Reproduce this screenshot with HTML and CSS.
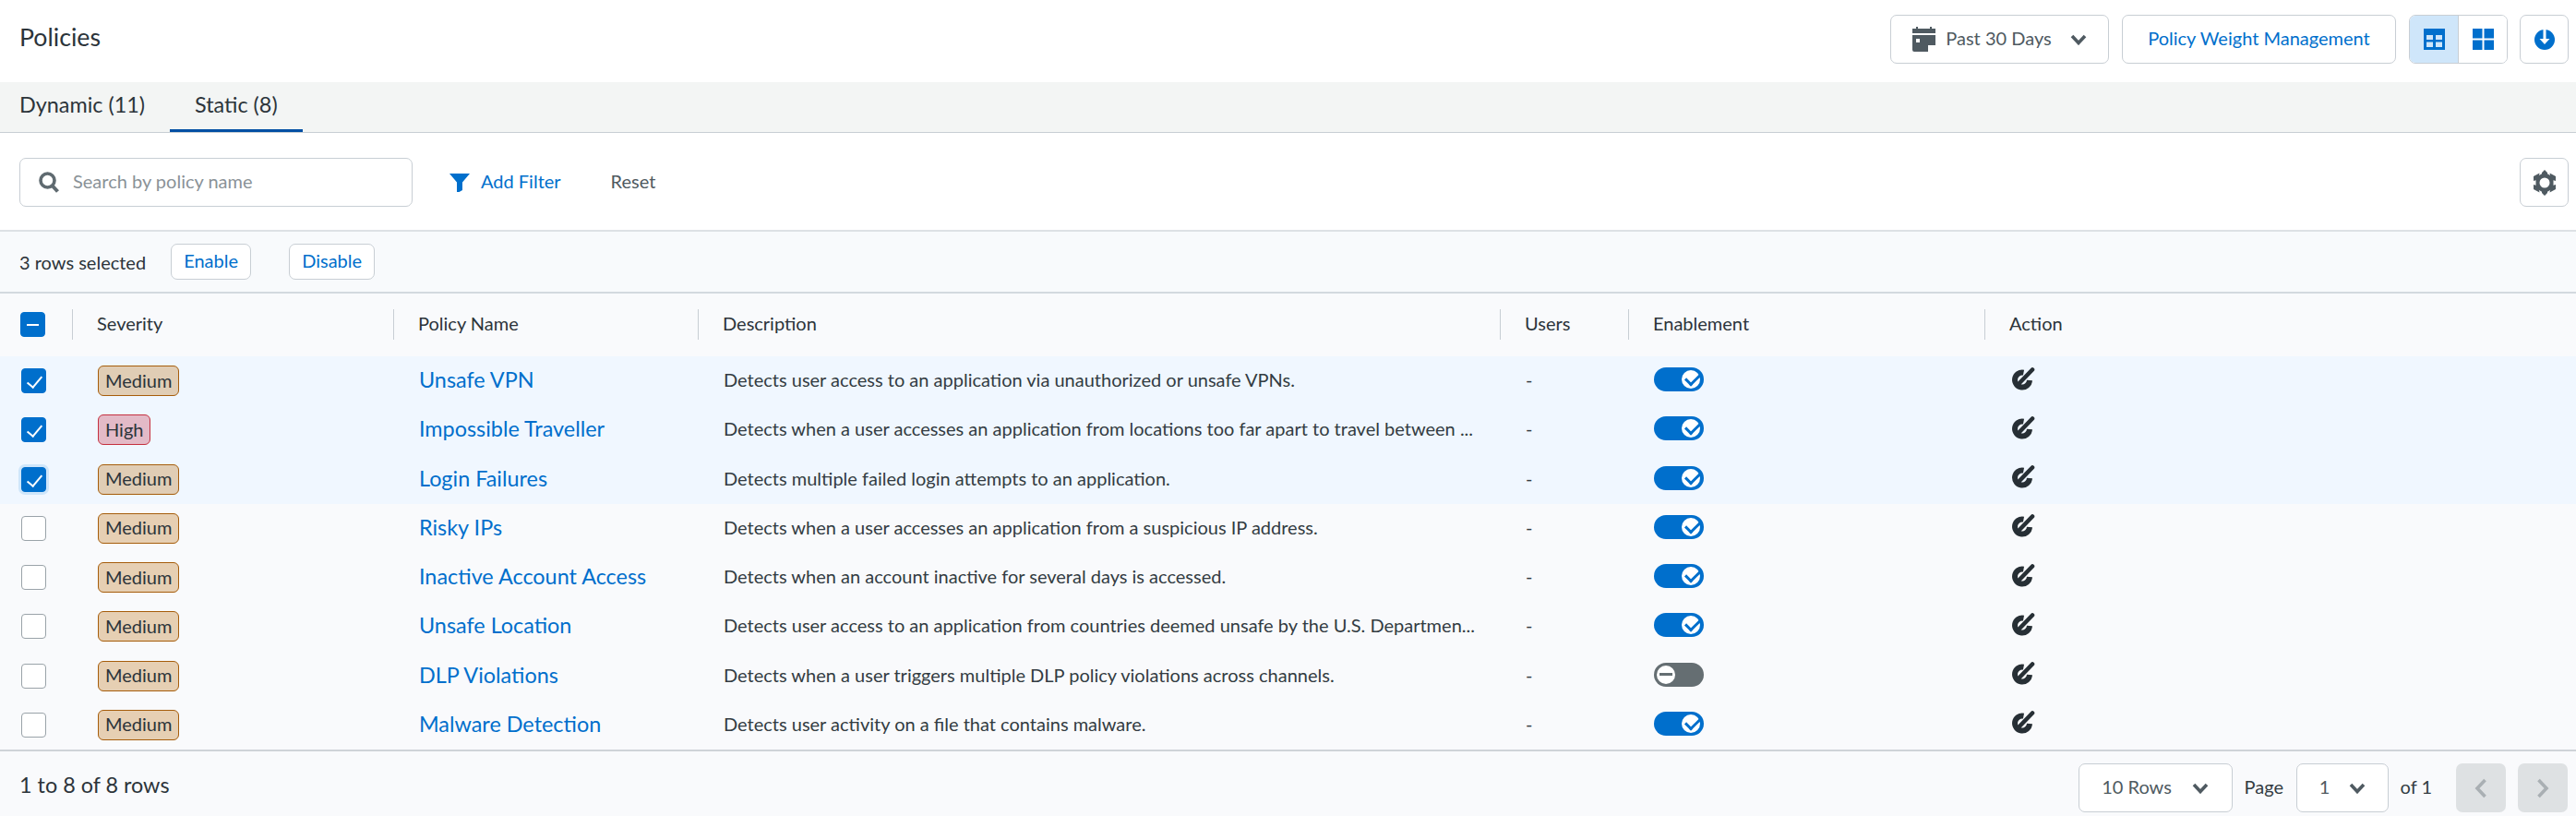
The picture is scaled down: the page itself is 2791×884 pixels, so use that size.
FILE: index.html
```html
<!DOCTYPE html>
<html lang="en">
<head>
    <meta charset="UTF-8">
    <title>Policies</title>
    <link rel="stylesheet" href="styles.css">
</head>
<body>
    <svg class="icon-defs" width="0" height="0">
        <symbol id="action-icon" viewBox="0 0 26 26">
            <path d="M13.500 6.600A8 8 0 1 0 20 15" fill="none" stroke="currentColor" stroke-width="6"/>
            <path d="M8 19 L23 3.500" fill="none" stroke="currentColor" stroke-width="4.600" stroke-linecap="round"/>
        </symbol>
        <symbol id="chevron-icon" viewBox="0 0 18 12">
            <path d="M2 2 L9 9.500 L16 2" fill="none" stroke="currentColor" stroke-width="3.600"/>
        </symbol>
    </svg>

    <header class="page-header">
        <h1>Policies</h1>
        <div class="header-actions">
            <button class="btn date-btn">
                <svg width="25" height="27" viewBox="0 0 25 27"><path d="M0 2h4V0h2v2h13V0h2v2h4v5H0zM0 9h25v11h-8v7H2a2 2 0 0 1-2-2zM4 13v4h4v-4z" fill="#4f5a61" fill-rule="evenodd"/></svg>
                <span class="label">Past 30 Days</span>
                <svg class="chevron" width="18" height="12"><use href="#chevron-icon"/></svg>
            </button>
            <button class="btn btn-link weight-btn"><span class="label">Policy Weight Management</span></button>
            <div class="view-switch">
                <button class="view-btn active">
                    <svg width="23" height="23" viewBox="0 0 23 23"><path d="M0 0h23v23H0z" fill="#006fcc"/><path d="M3 7h7v5H3zM13 7h7v5h-7zM3 14.500h7V20H3zM13 14.500h7V20h-7z" fill="#cfe6fa"/></svg>
                </button>
                <button class="view-btn">
                    <svg width="23" height="23" viewBox="0 0 23 23"><path d="M0 0h10.500v10.500H0zM12.500 0H23v10.500H12.500zM0 12.500h10.500V23H0zM12.500 12.500H23V23H12.500z" fill="#006fcc"/></svg>
                </button>
            </div>
            <button class="btn icon-btn download">
                <svg width="22" height="22" viewBox="0 0 22 22"><circle cx="11" cy="11" r="11" fill="#006fcc"/><path d="M9.500 0h3v10h4l-5.500 6-5.500-6h4z" fill="#fff"/></svg>
            </button>
        </div>
    </header>

    <nav class="tabs">
        <a class="tab">Dynamic (11)</a>
        <a class="tab active">Static (8)</a>
    </nav>

    <section class="filter-bar">
        <label class="search">
            <svg width="23" height="23" viewBox="0 0 23 23"><circle cx="9.500" cy="9.500" r="7.500" fill="none" stroke="#5f6a70" stroke-width="3.600"/><path d="M14.500 15 L20.500 21.500" stroke="#5f6a70" stroke-width="4"/></svg>
            <input type="text" placeholder="Search by policy name">
        </label>
        <button class="text-btn add-filter">
            <svg width="22" height="20" viewBox="0 0 22 20"><path d="M0 0h22l-8 9.500V18l-3.500 2H8V9.500z" fill="#006fcc"/></svg>
            <span class="label">Add Filter</span>
        </button>
        <button class="text-btn reset"><span class="label">Reset</span></button>
        <button class="btn icon-btn settings">
            <svg width="24" height="28" viewBox="0 0 24 28"><path d="M12 2.500 21.500 8v12L12 25.500 2.500 20V8z" fill="#4f5a61"/><path d="M9 3l3-3 3 3v3H9zM9 25l3 3 3-3v-3H9zM17.500 3.500 24 7v5l-5-1.500zM6.500 3.500 0 7v5l5-1.500zM17.500 24.500 24 21v-5l-5 1.500zM6.500 24.500 0 21v-5l5 1.500z" fill="#4f5a61"/><circle cx="12" cy="14" r="5.500" fill="#fff"/></svg>
        </button>
    </section>

    <section class="selection-bar">
        <span>3 rows selected</span>
        <button class="btn btn-link small enable"><span class="label">Enable</span></button>
        <button class="btn btn-link small"><span class="label">Disable</span></button>
    </section>

    <table class="policies">
        <colgroup>
            <col class="col-check"><col class="col-severity"><col class="col-name"><col class="col-desc"><col class="col-users"><col class="col-enable"><col>
        </colgroup>
        <thead>
            <tr>
                <th class="check-cell"><span class="checkbox mixed"></span></th>
                <th><div class="th-inner">Severity</div></th>
                <th><div class="th-inner">Policy Name</div></th>
                <th><div class="th-inner">Description</div></th>
                <th><div class="th-inner">Users</div></th>
                <th><div class="th-inner">Enablement</div></th>
                <th><div class="th-inner">Action</div></th>
            </tr>
        </thead>
        <tbody>
            <tr class="selected">
                <td class="check-cell"><span class="checkbox checked"></span></td>
                <td><span class="badge medium">Medium</span></td>
                <td class="text-cell"><a class="policy-link">Unsafe VPN</a></td>
                <td class="text-cell">Detects user access to an application via unauthorized or unsafe VPNs.</td>
                <td class="text-cell">-</td>
                <td><span class="toggle on"></span></td>
                <td><svg class="action" width="26" height="26"><use href="#action-icon"/></svg></td>
            </tr>
            <tr class="selected">
                <td class="check-cell"><span class="checkbox checked"></span></td>
                <td><span class="badge high">High</span></td>
                <td class="text-cell"><a class="policy-link">Impossible Traveller</a></td>
                <td class="text-cell">Detects when a user accesses an application from locations too far apart to travel between ...</td>
                <td class="text-cell">-</td>
                <td><span class="toggle on"></span></td>
                <td><svg class="action" width="26" height="26"><use href="#action-icon"/></svg></td>
            </tr>
            <tr class="selected">
                <td class="check-cell"><span class="checkbox checked focused"></span></td>
                <td><span class="badge medium">Medium</span></td>
                <td class="text-cell"><a class="policy-link">Login Failures</a></td>
                <td class="text-cell">Detects multiple failed login attempts to an application.</td>
                <td class="text-cell">-</td>
                <td><span class="toggle on"></span></td>
                <td><svg class="action" width="26" height="26"><use href="#action-icon"/></svg></td>
            </tr>
            <tr>
                <td class="check-cell"><span class="checkbox"></span></td>
                <td><span class="badge medium">Medium</span></td>
                <td class="text-cell"><a class="policy-link">Risky IPs</a></td>
                <td class="text-cell">Detects when a user accesses an application from a suspicious IP address.</td>
                <td class="text-cell">-</td>
                <td><span class="toggle on"></span></td>
                <td><svg class="action" width="26" height="26"><use href="#action-icon"/></svg></td>
            </tr>
            <tr>
                <td class="check-cell"><span class="checkbox"></span></td>
                <td><span class="badge medium">Medium</span></td>
                <td class="text-cell"><a class="policy-link">Inactive Account Access</a></td>
                <td class="text-cell">Detects when an account inactive for several days is accessed.</td>
                <td class="text-cell">-</td>
                <td><span class="toggle on"></span></td>
                <td><svg class="action" width="26" height="26"><use href="#action-icon"/></svg></td>
            </tr>
            <tr>
                <td class="check-cell"><span class="checkbox"></span></td>
                <td><span class="badge medium">Medium</span></td>
                <td class="text-cell"><a class="policy-link">Unsafe Location</a></td>
                <td class="text-cell">Detects user access to an application from countries deemed unsafe by the U.S. Departmen...</td>
                <td class="text-cell">-</td>
                <td><span class="toggle on"></span></td>
                <td><svg class="action" width="26" height="26"><use href="#action-icon"/></svg></td>
            </tr>
            <tr>
                <td class="check-cell"><span class="checkbox"></span></td>
                <td><span class="badge medium">Medium</span></td>
                <td class="text-cell"><a class="policy-link">DLP Violations</a></td>
                <td class="text-cell">Detects when a user triggers multiple DLP policy violations across channels.</td>
                <td class="text-cell">-</td>
                <td><span class="toggle off"></span></td>
                <td><svg class="action" width="26" height="26"><use href="#action-icon"/></svg></td>
            </tr>
            <tr>
                <td class="check-cell"><span class="checkbox"></span></td>
                <td><span class="badge medium">Medium</span></td>
                <td class="text-cell"><a class="policy-link">Malware Detection</a></td>
                <td class="text-cell">Detects user activity on a file that contains malware.</td>
                <td class="text-cell">-</td>
                <td><span class="toggle on"></span></td>
                <td><svg class="action" width="26" height="26"><use href="#action-icon"/></svg></td>
            </tr>
        </tbody>
    </table>

    <footer class="table-footer">
        <span class="row-count">1 to 8 of 8 rows</span>
        <div class="pager">
            <button class="btn rows-btn"><span class="label">10 Rows</span> <svg class="chevron" width="18" height="12"><use href="#chevron-icon"/></svg></button>
            <span class="page-label">Page</span>
            <button class="btn page-btn"><span class="label">1</span> <svg class="chevron" width="18" height="12"><use href="#chevron-icon"/></svg></button>
            <span class="page-of">of 1</span>
            <button class="pager-arrow">
                <svg width="14" height="22" viewBox="0 0 14 22"><path d="M11.500 2 3 11l8.500 9" fill="none" stroke="#a9afb3" stroke-width="3.600"/></svg>
            </button>
            <button class="pager-arrow">
                <svg width="14" height="22" viewBox="0 0 14 22"><path d="M2.500 2 11 11l-8.500 9" fill="none" stroke="#a9afb3" stroke-width="3.600"/></svg>
            </button>
        </div>
    </footer>
</body>
</html>
```

FILE: styles.css
```css
* {
    box-sizing: border-box;
}

body {
    margin: 0;
    height: 884px;
    overflow: hidden;
    font-family: 'Lato', sans-serif;
    font-size: 20px;
    color: #333c42;
    background-color: #f9fafc;
}

button {
    font-family: inherit;
    cursor: pointer;
}

.icon-defs {
    position: absolute;
}

.label {
    margin-bottom: 3px;
}

/* shared buttons */
.btn {
    display: flex;
    align-items: center;
    justify-content: center;
    height: 53px;
    background: #fff;
    border: 1px solid #c8ced4;
    border-radius: 7px;
    font-size: 20px;
    color: #4f5a61;
    padding: 0;
}

.btn-link {
    color: #006fcc;
}

.chevron {
    color: #4f5a61;
}

/* page header */
.page-header {
    display: flex;
    align-items: center;
    justify-content: space-between;
    height: 89px;
    padding: 0 8px 4px 21px;
    background: #fff;
}

h1 {
    margin: 0 0 5px;
    font-size: 26.700px;
    font-weight: 400;
    color: #2c343a;
}

.header-actions {
    display: flex;
    align-items: center;
    gap: 14px;
}

.date-btn {
    width: 237px;
    gap: 11px;
}

.date-btn .chevron {
    margin-left: 9px;
}

.weight-btn {
    width: 297px;
    color: #006fcc;
}

.view-switch {
    display: flex;
    width: 107px;
    height: 53px;
    background: #fff;
    border: 1px solid #c8ced4;
    border-radius: 7px;
    overflow: hidden;
}

.view-btn {
    flex: 1;
    display: flex;
    align-items: center;
    justify-content: center;
    border: none;
    background: #fff;
    padding: 0;
}

.view-btn.active {
    background: #cfe6fa;
    border-right: 1px solid #c8ced4;
}

.icon-btn {
    width: 53px;
}

.download {
    margin-left: -1px;
}

/* tabs */
.tabs {
    display: flex;
    height: 55px;
    background: #f3f5f4;
    border-bottom: 1px solid #c8ced4;
}

.tab {
    display: flex;
    align-items: center;
    height: 54px;
    padding: 0 27px 6px;
    font-size: 23.400px;
    color: #2c343a;
    white-space: nowrap;
}

.tab:first-child {
    width: 184px;
    padding-left: 21px;
}

.tab.active {
    width: 144px;
    border-bottom: 3px solid #004fa3;
    padding-bottom: 3px;
}

/* search and filters */
.filter-bar {
    display: flex;
    align-items: center;
    height: 107px;
    padding: 2px 8px 0 21px;
    background: #fff;
    border-bottom: 2px solid #dde1e5;
}

.search {
    display: flex;
    align-items: center;
    gap: 14px;
    width: 426px;
    height: 53px;
    padding-left: 20px;
    border: 1px solid #c8ced4;
    border-radius: 7px;
}

.search input {
    flex: 1;
    min-width: 0;
    padding: 0 0 4px;
    border: none;
    outline: none;
    background: transparent;
    font-family: inherit;
    font-size: 20px;
}

.search input::placeholder {
    color: #8a9297;
}

.text-btn {
    display: flex;
    align-items: center;
    gap: 12px;
    padding: 0;
    border: none;
    background: none;
    font-size: 20px;
}

.add-filter {
    margin-left: 40px;
    color: #006fcc;
}

.reset {
    margin-left: 54px;
    color: #4f5a61;
}

.settings {
    margin-left: auto;
}

/* selection bar */
.selection-bar {
    display: flex;
    align-items: center;
    height: 67px;
    padding-left: 21px;
    background: #f8fafc;
    border-bottom: 2px solid #d3d9df;
    color: #2c343a;
}

.btn.small {
    height: 39px;
    width: 87px;
    margin-left: 27px;
}

.btn.small.enable {
    margin-right: 14px;
}

.btn.small:last-child {
    width: 93px;
}

/* table */
.policies {
    width: 100%;
    table-layout: fixed;
    border-collapse: collapse;
}

.col-check {
    width: 78px;
}

.col-severity {
    width: 348px;
}

.col-name {
    width: 330px;
}

.col-desc {
    width: 869px;
}

.col-users {
    width: 139px;
}

.col-enable {
    width: 386px;
}

th {
    height: 68px;
    padding: 0;
    text-align: left;
    font-weight: 400;
    color: #2c343a;
}

.th-inner {
    display: flex;
    align-items: center;
    height: 33px;
    margin-bottom: 2px;
    padding: 0 0 2px 26px;
    border-left: 1px solid #c8ced4;
}

td {
    height: 53.250px;
    padding: 0 0 0 28px;
    color: #333c42;
    white-space: nowrap;
}

.text-cell {
    padding-bottom: 3px;
}

.check-cell {
    padding-left: 23px;
}

th.check-cell {
    padding-left: 22px;
    padding-bottom: 2px;
}

.selected td {
    background: #f0f7ff;
}

.policy-link {
    font-size: 23.400px;
    color: #006fcc;
}

.checkbox {
    display: block;
    position: relative;
    width: 27px;
    height: 27px;
    background: #fff;
    border: 1px solid #9aa3a9;
    border-radius: 4px;
}

.checkbox.checked,
.checkbox.mixed {
    background: #006fcc;
    border-color: #006fcc;
}

.checkbox.checked::after {
    content: "";
    position: absolute;
    left: 9px;
    top: 4px;
    width: 7px;
    height: 14px;
    border: solid #fff;
    border-width: 0 2px 2px 0;
    transform: rotate(40deg);
}

.checkbox.mixed::after {
    content: "";
    position: absolute;
    left: 6px;
    top: 12px;
    width: 13px;
    height: 2px;
    background: #fff;
}

.checkbox.focused {
    box-shadow: 0 0 0 3px #cfe6fa;
}

.badge {
    display: inline-flex;
    align-items: center;
    height: 33px;
    padding: 0 7px 2px;
    border: 1px solid;
    border-radius: 6px;
    vertical-align: middle;
}

.badge.medium {
    background: rgba(198, 130, 50, 0.36);
    border-color: #a65d0b;
    color: #2c343a;
}

.badge.high {
    background: rgba(200, 60, 80, 0.32);
    border-color: #c5303f;
    color: #2c343a;
}

.toggle {
    display: block;
    position: relative;
    width: 54px;
    height: 26px;
    margin-bottom: 3px;
    border-radius: 13px;
    background: #006fcc;
}

.toggle::before {
    content: "";
    position: absolute;
    top: 3px;
    width: 20px;
    height: 20px;
    border-radius: 50%;
    background: #fff;
}

.toggle.on::before {
    right: 4.500px;
}

.toggle.on::after {
    content: "";
    position: absolute;
    left: 34px;
    top: 6px;
    width: 14px;
    height: 7px;
    border: solid #006fcc;
    border-width: 0 0 3px 3px;
    transform: rotate(-45deg);
}

.toggle.off {
    background: #656e72;
}

.toggle.off::before {
    left: 3px;
}

.toggle.off::after {
    content: "";
    position: absolute;
    left: 6px;
    top: 11.500px;
    width: 14px;
    height: 3px;
    background: #656e72;
}

.action {
    display: block;
    color: #272f35;
    margin: 0 0 6px 1px;
}

/* footer */
.table-footer {
    display: flex;
    align-items: center;
    justify-content: space-between;
    height: 72px;
    padding: 0 9px 0 21px;
    border-top: 2px solid #cfd3d8;
}

.row-count {
    font-size: 23.400px;
    color: #2c343a;
    padding-top: 2px;
}

.pager {
    display: flex;
    align-items: center;
    padding-top: 9px;
}

.rows-btn {
    width: 167px;
    gap: 22px;
}

.page-label {
    margin: 0 14px 3px 13px;
}

.page-btn {
    width: 100px;
    gap: 21px;
}

.page-of {
    margin: 0 26px 3px 12.500px;
}

.pager-arrow {
    display: flex;
    align-items: center;
    justify-content: center;
    width: 54px;
    height: 53px;
    margin-right: 13px;
    background: #dee1e3;
    border: none;
    border-radius: 7px;
    padding: 0;
}

.pager-arrow:last-child {
    margin-right: 0;
}
```
